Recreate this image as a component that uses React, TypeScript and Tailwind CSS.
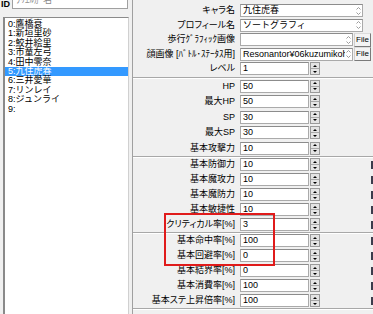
import React from "react";

type Row = { label: string; value: string; kind: "text" | "file" | "num"; mark?: boolean };

const groups: Row[][] = [
  [
    { label: "キャラ名", value: "九住虎春", kind: "text" },
    { label: "プロフィール名", value: "ソートグラフィ", kind: "text" },
    { label: "歩行ｸﾞﾗﾌｨｯｸ画像", value: "", kind: "file" },
    { label: "顔画像 [ﾊﾞﾄﾙ･ｽﾃｰﾀｽ用]", value: "Resonantor¥06kuzumikoharu.png", kind: "file" },
    { label: "レベル", value: "1", kind: "num" },
  ],
  [
    { label: "HP", value: "50", kind: "num" },
    { label: "最大HP", value: "50", kind: "num" },
    { label: "SP", value: "30", kind: "num" },
    { label: "最大SP", value: "30", kind: "num" },
    { label: "基本攻撃力", value: "10", kind: "num" },
  ],
  [
    { label: "基本防御力", value: "10", kind: "num", mark: true },
    { label: "基本魔攻力", value: "10", kind: "num", mark: true },
    { label: "基本魔防力", value: "10", kind: "num", mark: true },
    { label: "基本敏捷性", value: "10", kind: "num", mark: true },
    { label: "クリティカル率[%]", value: "3", kind: "num", mark: true },
  ],
  [
    { label: "基本命中率[%]", value: "100", kind: "num", mark: true },
    { label: "基本回避率[%]", value: "0", kind: "num", mark: true },
    { label: "基本結界率[%]", value: "0", kind: "num", mark: true },
    { label: "基本消費率[%]", value: "100", kind: "num", mark: true },
    { label: "基本ステ上昇倍率[%]", value: "100", kind: "num", mark: true },
  ],
];

const groupCls = [
  "pt-[2px] pb-[2px] gap-[1.5px]",
  "pt-[1.5px] pb-[1.5px] gap-[2.5px]",
  "pt-[1px] pb-[1px] gap-[2px]",
  "pt-[1px] pb-[1px] gap-[2px]",
];

const names = [
  "0:鷹橋衰",
  "1:新垣里砂",
  "2:鮫井絵里",
  "3:市童左弓",
  "4:田中零奈",
  "5:九住虎春",
  "6:三井愛華",
  "7:リンレイ",
  "8:ジュンライ",
  "9:",
];

function Spinner() {
  return (
    <div className="w-[10px] h-[13px] ml-[1px] border border-[#9a9a9a] bg-[#e4e4e4] flex flex-col shrink-0">
      <div className="flex-1 flex items-center justify-center border-b border-[#a8a8a8]">
        <div className="w-0 h-0 border-l-[2px] border-r-[2px] border-b-[2px] border-l-transparent border-r-transparent border-b-black" />
      </div>
      <div className="flex-1 flex items-center justify-center">
        <div className="w-0 h-0 border-l-[2px] border-r-[2px] border-t-[2px] border-l-transparent border-r-transparent border-t-black" />
      </div>
    </div>
  );
}

function TextArrows() {
  return (
    <div className="flex flex-col items-center justify-center gap-[2px] w-[7px] shrink-0">
      <svg width="5" height="3" viewBox="0 0 5 3">
        <path d="M0.5 2.5 L2.5 0.5 L4.5 2.5" stroke="#9c9c9c" fill="none" strokeWidth="1" />
      </svg>
      <svg width="5" height="3" viewBox="0 0 5 3">
        <path d="M0.5 0.5 L2.5 2.5 L4.5 0.5" stroke="#9c9c9c" fill="none" strokeWidth="1" />
      </svg>
    </div>
  );
}

function FieldRow({ row }: { row: Row }) {
  return (
    <div className="flex items-center h-[13px]">
      <div className="w-[102px] shrink-0 text-right pr-[1px] text-[9px] leading-[13px] whitespace-nowrap [font-feature-settings:'palt']">
        {row.label}
      </div>
      <div className="w-[4px] shrink-0" />
      {row.kind === "num" && (
        <>
          <div className="w-[69px] h-[13px] bg-white border border-[#aaaaaa] border-t-[#8c8c8c] text-[9px] leading-[11px] pl-[2px] shrink-0">
            {row.value}
          </div>
          <Spinner />
        </>
      )}
      {row.kind === "text" && (
        <div className="w-[123px] h-[13px] bg-white border border-[#aaaaaa] border-t-[#8c8c8c] flex items-center pl-[2px] shrink-0">
          <div className="flex-1 text-[9px] leading-[11px] whitespace-nowrap overflow-hidden">{row.value}</div>
          <TextArrows />
        </div>
      )}
      {row.kind === "file" && (
        <>
          <div className="w-[113px] h-[13px] bg-white border border-[#aaaaaa] border-t-[#8c8c8c] flex items-center pl-[2px] shrink-0">
            <div className="flex-1 min-w-0 text-[9px] leading-[11px] whitespace-nowrap overflow-hidden">{row.value}</div>
            <TextArrows />
          </div>
          <div className="ml-[1px] w-[17px] h-[14px] bg-[#f4f4f4] border border-[#7a7a7a] border-l-[#cfcfcf] border-t-[#dcdcdc] text-[8px] leading-[12px] text-center shrink-0 overflow-hidden">
            File
          </div>
        </>
      )}
      <div className="flex-1" />
      {row.mark && <div className="w-[2px] h-[8px] bg-[#3c3c4c] shrink-0" />}
    </div>
  );
}

export default function App() {
  return (
    <div className="w-[373px] h-[314px] bg-[#f0f0f0] overflow-hidden relative flex text-black font-[family-name:Liberation_Sans,Noto_Sans_CJK_JP,sans-serif]">
      {/* left column */}
      <div className="w-[132px] shrink-0 flex flex-col">
        <div className="flex items-end h-[15px] -mt-[6px]">
          <div className="w-[12px] text-[9px] font-bold leading-[10px] pl-[1px]">ID</div>
          <div className="w-[116px] h-[15px] bg-white border border-[#a0a0a0] text-[9px] leading-[10px] text-[#8a8a8a] pl-[3px] overflow-hidden whitespace-nowrap">
            ﾌﾘｴﾙｶﾞ名
          </div>
        </div>
        <div className="mt-[8px] ml-[3px] w-[126px] flex-1 bg-white border-l-[2px] border-t border-r border-[#8a8a8a] border-r-[#d0d0d0] pt-[2px] text-[9px]">
          {names.map((n, i) => (
            <div
              key={i}
              className={
                i === 5
                  ? "h-[9.4px] leading-[9.4px] pl-[3px] bg-[#3399ff] text-white whitespace-nowrap"
                  : "h-[9.4px] leading-[9.4px] pl-[3px] whitespace-nowrap"
              }
            >
              {n}
            </div>
          ))}
        </div>
      </div>

      {/* right panel */}
      <div className="flex-1 flex flex-col border-l border-[#a0a0a0] pt-[2px]">
        {groups.map((g, gi) => (
          <div
            key={gi}
            className={
              "flex flex-col border-b border-[#a8a8a8] shadow-[0_1px_0_#ffffff] pl-[1px] " + groupCls[gi]
            }
          >
            {g.map((r, ri) => (
              <FieldRow key={ri} row={r} />
            ))}
          </div>
        ))}
      </div>

      {/* highlight box */}
      <div className="absolute left-[164px] top-[213px] w-[111px] h-[53px] border-[2.5px] border-[#e01b1b]" />
    </div>
  );
}
